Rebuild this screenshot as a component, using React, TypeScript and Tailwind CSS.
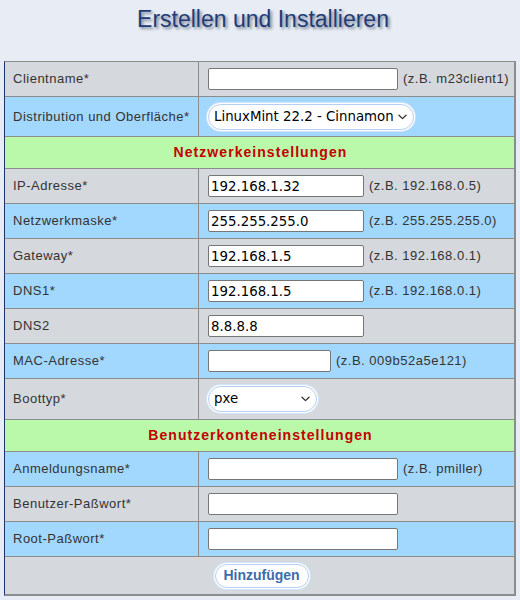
import type { ReactNode } from 'react';

const sans = "font-['Liberation_Sans',Arial,sans-serif]";
const ctrlFont = "font-['DejaVu_Sans',sans-serif] text-[13.33px]";

const grayRow = 'bg-[#d5d8dc]';
const blueRow = 'bg-[#a2d7fe]';

const Chevron = () => (
  <svg width="9" height="6" viewBox="0 0 9 6" className="absolute right-[7px] top-1/2 -translate-y-1/2 pointer-events-none">
    <path d="M1 1.2 L4.5 4.6 L8 1.2" fill="none" stroke="#333" strokeWidth="1.3" strokeLinecap="round" strokeLinejoin="round" />
  </svg>
);

// heights include the 1px bottom divider (border-box)
function Row({ label, bg, h = 'h-[35px]', children }: { label: string; bg: string; h?: string; children: ReactNode }) {
  return (
    <div className={`flex border-b border-[#8c8c8c] ${bg} ${h}`}>
      <div className="w-[194px] shrink-0 border-r border-[#8c8c8c] pl-2 flex items-center text-[13px] tracking-[0.5px] text-[#333]">
        {label}
      </div>
      <div className="flex-1 pl-[9px] flex items-center">{children}</div>
    </div>
  );
}

function Field({ value = '', width, hint }: { value?: string; width: string; hint?: string }) {
  return (
    <>
      <input
        defaultValue={value}
        className={`${width} h-[22px] border border-[#767676] rounded-[2px] bg-white px-[2px] text-black outline-none ${ctrlFont}`}
      />
      {hint && <span className="ml-[5px] text-[13px] tracking-[0.5px] text-[#333]">{hint}</span>}
    </>
  );
}

function PillSelect({ width, value }: { width: string; value: string }) {
  return (
    <div className={`relative ${width} h-[26px]`}>
      <select
        defaultValue={value}
        className={`appearance-none w-full h-full rounded-full bg-white border border-[#b5d0f3] shadow-[0_0_0_1px_#ffffff,0_0_0_2px_#d3e4fa] pl-[5px] pr-5 text-black outline-none ${ctrlFont}`}
      >
        <option value={value}>{value}</option>
      </select>
      <Chevron />
    </div>
  );
}

function Section({ title }: { title: string }) {
  return (
    <div className="h-[32px] border-b border-[#8c8c8c] bg-[#b9f9a9] flex items-center justify-center pl-[2px] text-[14px] font-bold tracking-[1.05px] text-[#c40000]">
      {title}
    </div>
  );
}

export default function App() {
  return (
    <div className={`min-h-[600px] w-[520px] bg-[#e8edf5] ${sans}`}>
      <div className="h-[61px] pt-[6px] pl-[6px] text-center">
        <h1 className="text-[23px] leading-[26px] text-[#1f3c76] [text-shadow:2px_2px_3px_rgba(60,70,95,0.65)]">
          Erstellen und Installieren
        </h1>
      </div>

      <div className="mx-auto w-[512px] border-t border-[#8c8c8c] border-l border-l-[#1c3466] border-r-2 border-r-[#8c8c8c] border-b-2 border-b-[#8c8c8c]">
        <Row label="Clientname*" bg={grayRow}>
          <Field width="w-[190px]" hint="(z.B. m23client1)" />
        </Row>
        <Row label="Distribution und Oberfläche*" bg={blueRow} h="h-[40px]">
          <PillSelect width="w-[206px]" value="LinuxMint 22.2 - Cinnamon" />
        </Row>

        <Section title="Netzwerkeinstellungen" />
        <Row label="IP-Adresse*" bg={grayRow}>
          <Field value="192.168.1.32" width="w-[156px]" hint="(z.B. 192.168.0.5)" />
        </Row>
        <Row label="Netzwerkmaske*" bg={blueRow}>
          <Field value="255.255.255.0" width="w-[156px]" hint="(z.B. 255.255.255.0)" />
        </Row>
        <Row label="Gateway*" bg={grayRow}>
          <Field value="192.168.1.5" width="w-[156px]" hint="(z.B. 192.168.0.1)" />
        </Row>
        <Row label="DNS1*" bg={blueRow}>
          <Field value="192.168.1.5" width="w-[156px]" hint="(z.B. 192.168.0.1)" />
        </Row>
        <Row label="DNS2" bg={grayRow}>
          <Field value="8.8.8.8" width="w-[156px]" />
        </Row>
        <Row label="MAC-Adresse*" bg={blueRow}>
          <Field width="w-[123px]" hint="(z.B. 009b52a5e121)" />
        </Row>
        <Row label="Boottyp*" bg={grayRow} h="h-[41px]">
          <PillSelect width="w-[109px]" value="pxe" />
        </Row>

        <Section title="Benutzerkonteneinstellungen" />
        <Row label="Anmeldungsname*" bg={blueRow}>
          <Field width="w-[190px]" hint="(z.B. pmiller)" />
        </Row>
        <Row label="Benutzer-Paßwort*" bg={grayRow}>
          <Field width="w-[190px]" />
        </Row>
        <Row label="Root-Paßwort*" bg={blueRow}>
          <Field width="w-[190px]" />
        </Row>

        <div className={`h-[37px] ${grayRow} flex items-center justify-center`}>
          <button className="ml-[4px] w-[94px] h-[24px] rounded-full bg-white border border-[#b5d0f3] shadow-[0_0_0_1px_#ffffff,0_0_0_2px_#d3e4fa] text-[14px] font-bold text-[#3b6bab]">
            Hinzufügen
          </button>
        </div>
      </div>
    </div>
  );
}
